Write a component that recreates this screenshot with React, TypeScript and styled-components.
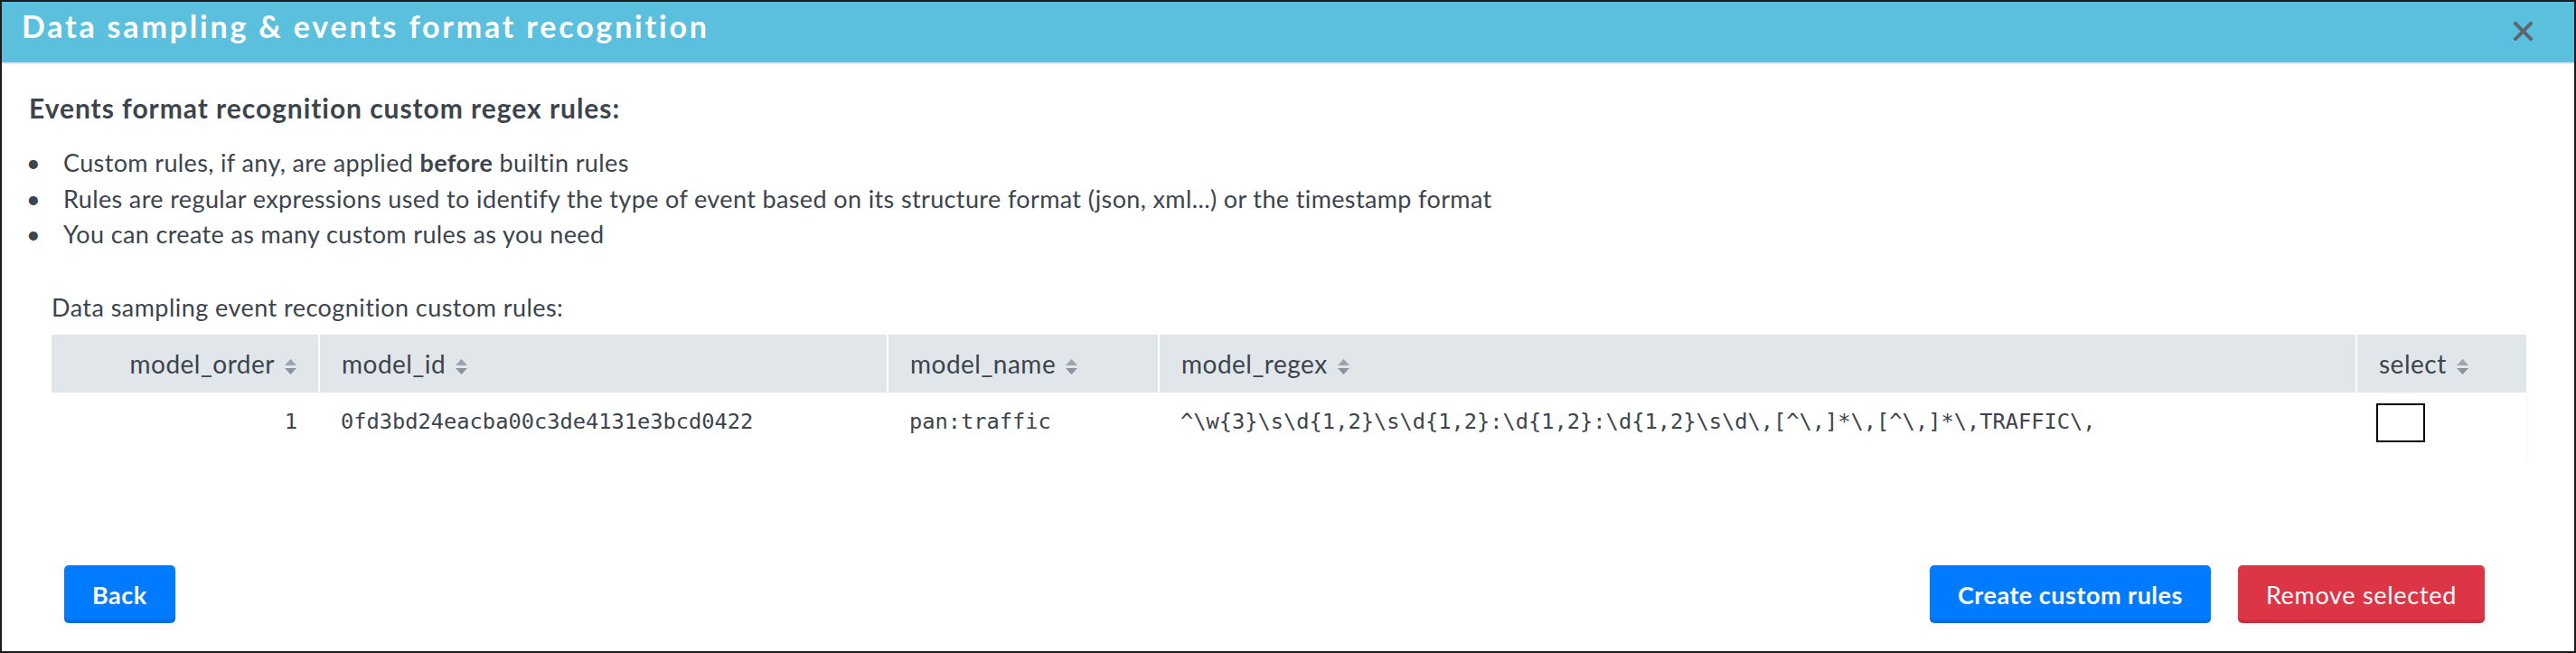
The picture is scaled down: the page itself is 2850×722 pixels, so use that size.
import React from "react";
import styled, { createGlobalStyle } from "styled-components";

const GlobalStyle = createGlobalStyle`
  html, body {
    margin: 0;
    padding: 0;
    background: #fff;
  }
  body {
    font-family: Lato, "Open Sans", sans-serif;
    color: #3c444d;
  }
  * {
    box-sizing: border-box;
  }
`;

const Modal = styled.div`
  width: 2850px;
  height: 722px;
  border: 2px solid #1b1b1b;
  display: flex;
  flex-direction: column;
  background: #fff;
`;

const Header = styled.div`
  flex: none;
  height: 69px;
  background: #5bc0de;
  border-bottom: 2px solid #e6eaed;
  display: flex;
  align-items: flex-start;
  justify-content: space-between;
  padding: 0 46px 0 22px;
`;

const Title = styled.h1`
  margin: 11px 0 0;
  font-size: 34px;
  line-height: 32px;
  font-weight: 700;
  letter-spacing: 2.8px;
  color: #fff;
`;

const CloseButton = styled.button`
  margin-top: 22px;
  padding: 0;
  border: none;
  background: none;
  width: 21px;
  height: 21px;
  cursor: pointer;
  display: flex;
`;

const Body = styled.div`
  padding: 0 55px 0 30px;
`;

const Heading = styled.h2`
  margin: 31px 0 0;
  font-size: 30px;
  line-height: 34px;
  font-weight: 700;
  letter-spacing: 0.95px;
`;

const Bullets = styled.ul`
  margin: 24px 0 0 -3px;
  padding: 0;
  list-style: none;
`;

const Bullet = styled.li`
  display: flex;
  font-size: 27px;
  line-height: 39.5px;
  letter-spacing: 0.37px;
  &::before {
    content: "•";
    flex: none;
    width: 41px;
  }
  b {
    font-weight: 700;
  }
`;

const Section = styled.div`
  margin-top: 41px;
  padding-left: 25px;
`;

const Label = styled.div`
  font-size: 27px;
  line-height: 40px;
  letter-spacing: 0.45px;
  margin-bottom: 10px;
`;

const Table = styled.table`
  width: 2738px;
  table-layout: fixed;
  border-collapse: collapse;
  border-spacing: 0;
`;

const HeadCell = styled.th<{ $right?: boolean }>`
  height: 64px;
  padding: 0 24px;
  background: #e1e6eb;
  border-right: 2px solid #fff;
  text-align: ${(p) => (p.$right ? "right" : "left")};
  font-size: 28px;
  font-weight: 400;
  letter-spacing: 0.5px;
  white-space: nowrap;
  &:last-child {
    border-right: none;
  }
`;

const Cell = styled.td<{ $right?: boolean }>`
  height: 77px;
  padding: 12px 24px 0;
  vertical-align: top;
  text-align: ${(p) => (p.$right ? "right" : "left")};
  font-family: "DejaVu Sans Mono", "Liberation Mono", monospace;
  font-size: 23.7px;
  line-height: 40px;
  white-space: nowrap;
  &:last-child {
    padding-left: 22px;
    border-right: 1px solid #f1f3f5;
  }
`;

const SortIcon = styled.svg`
  width: 13px;
  height: 17px;
  margin-left: 11px;
  vertical-align: -1px;
`;

const Checkbox = styled.div`
  width: 54px;
  height: 43px;
  border: 2px solid #000;
  background: #fff;
`;

const Footer = styled.div`
  margin-top: auto;
  padding: 0 99px 31px 69px;
  display: flex;
  align-items: center;
  justify-content: space-between;
`;

const Actions = styled.div`
  display: flex;
  gap: 30px;
`;

const Button = styled.button<{ $variant: "primary" | "danger"; $bold?: boolean }>`
  height: 64px;
  padding: 0 31px;
  border: none;
  border-radius: 5px;
  font-family: Lato, "Open Sans", sans-serif;
  font-size: 27px;
  font-weight: ${(p) => (p.$bold ? 700 : 400)};
  letter-spacing: ${(p) => (p.$bold ? "0.5px" : "0.7px")};
  color: #fff;
  cursor: pointer;
  background: ${(p) => (p.$variant === "primary" ? "#007bff" : "#dc3545")};
  box-shadow: inset 0 -4px 0 rgba(0, 0, 0, 0.09);
`;

const Sort = () => (
  <SortIcon viewBox="0 0 13 17">
    <polygon points="0,7 6.5,0 13,7" fill="#9ba3ad" />
    <polygon points="0,10 13,10 6.5,17" fill="#8a939e" />
  </SortIcon>
);

const columns = [
  { key: "model_order", width: 296, right: true },
  { key: "model_id", width: 629 },
  { key: "model_name", width: 300 },
  { key: "model_regex", width: 1325 },
  { key: "select", width: 188 },
];

const rows = [
  {
    order: "1",
    id: "0fd3bd24eacba00c3de4131e3bcd0422",
    name: "pan:traffic",
    regex: "^\\w{3}\\s\\d{1,2}\\s\\d{1,2}:\\d{1,2}:\\d{1,2}\\s\\d\\,[^\\,]*\\,[^\\,]*\\,TRAFFIC\\,",
  },
];

export default function App() {
  return (
    <>
      <GlobalStyle />
      <Modal>
        <Header>
          <Title>Data sampling &amp; events format recognition</Title>
          <CloseButton aria-label="Close">
            <svg width="21" height="21" viewBox="0 0 21 21">
              <path d="M2 2 L19 19 M19 2 L2 19" stroke="#5d6571" strokeWidth="4" strokeLinecap="square" />
            </svg>
          </CloseButton>
        </Header>
        <Body>
          <Heading>Events format recognition custom regex rules:</Heading>
          <Bullets>
            <Bullet>
              <span>
                Custom rules, if any, are applied <b>before</b> builtin rules
              </span>
            </Bullet>
            <Bullet>
              Rules are regular expressions used to identify the type of event based on its structure format (json,
              xml...) or the timestamp format
            </Bullet>
            <Bullet>You can create as many custom rules as you need</Bullet>
          </Bullets>
          <Section>
            <Label>Data sampling event recognition custom rules:</Label>
            <Table>
              <colgroup>
                {columns.map((c) => (
                  <col key={c.key} style={{ width: c.width }} />
                ))}
              </colgroup>
              <thead>
                <tr>
                  {columns.map((c) => (
                    <HeadCell key={c.key} $right={c.right}>
                      {c.key}
                      <Sort />
                    </HeadCell>
                  ))}
                </tr>
              </thead>
              <tbody>
                {rows.map((r) => (
                  <tr key={r.id}>
                    <Cell $right>{r.order}</Cell>
                    <Cell>{r.id}</Cell>
                    <Cell>{r.name}</Cell>
                    <Cell>{r.regex}</Cell>
                    <Cell>
                      <Checkbox />
                    </Cell>
                  </tr>
                ))}
              </tbody>
            </Table>
          </Section>
        </Body>
        <Footer>
          <Button $variant="primary" $bold>
            Back
          </Button>
          <Actions>
            <Button $variant="primary" $bold>
              Create custom rules
            </Button>
            <Button $variant="danger">Remove selected</Button>
          </Actions>
        </Footer>
      </Modal>
    </>
  );
}
